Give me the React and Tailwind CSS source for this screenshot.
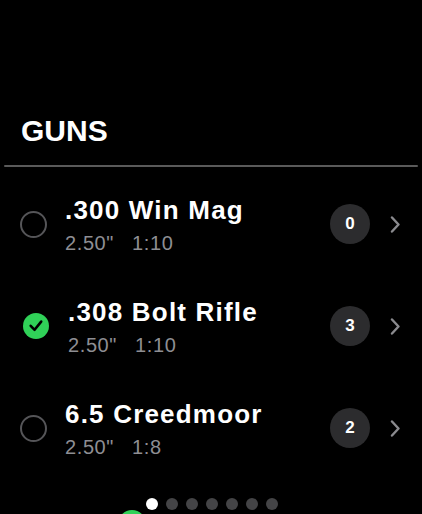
import React from 'react';

const guns = [
  { id: 1, name: '.300 Win Mag', height: '2.50"', twist: '1:10', count: 0, selected: false },
  { id: 2, name: '.308 Bolt Rifle', height: '2.50"', twist: '1:10', count: 3, selected: true },
  { id: 3, name: '6.5 Creedmoor', height: '2.50"', twist: '1:8', count: 2, selected: false },
];

const font = { fontFamily: '"Liberation Sans", Arial, sans-serif' };

const Radio = ({ selected }) =>
  selected ? (
    <svg width="26" height="26" viewBox="0 0 26 26">
      <circle cx="13" cy="13" r="13" fill="#30d158" />
      <path d="M7.7 12.8 L11.6 16.8 L18.2 8.6" fill="none" stroke="#000" strokeWidth="2.6" strokeLinecap="round" strokeLinejoin="round" />
    </svg>
  ) : (
    <div className="w-[27px] h-[27px] rounded-full border-[2.5px] border-[#555558]" />
  );

const Chevron = () => (
  <svg width="11" height="17" viewBox="0 0 11 17">
    <path d="M2 1.5 L8.5 8.5 L2 15.5" fill="none" stroke="#8a8a8e" strokeWidth="2.4" strokeLinecap="round" strokeLinejoin="round" />
  </svg>
);

const GunRow = ({ gun }) => (
  <div className="h-[102px] flex items-center">
    <div className={`flex items-center flex-1 ${gun.selected ? 'pl-[22px]' : 'pl-[20px]'}`}>
      <div className="w-[27px] flex justify-center">
        <Radio selected={gun.selected} />
      </div>
      <div className={`flex flex-col mt-[2px] ${gun.selected ? 'ml-[19px]' : 'ml-[18px]'}`}>
        <div className="text-[26px] leading-[30px] font-bold text-white tracking-[1.2px]">{gun.name}</div>
        <div className="mt-[6px] flex gap-[18px] text-[20px] leading-[24px] text-[#8e8e93] tracking-[0.6px]">
          <span>{gun.height}</span>
          <span>{gun.twist}</span>
        </div>
      </div>
    </div>
    <div className="flex items-center gap-[20px] pr-[21px]">
      <div className="w-[40px] h-[40px] rounded-full bg-[#2c2c2e] flex items-center justify-center text-white font-bold text-[17px]">
        {gun.count}
      </div>
      <Chevron />
    </div>
  </div>
);

export default function App() {
  return (
    <div className="w-[422px] h-[514px] bg-black overflow-hidden flex flex-col relative" style={font}>
      <h1 className="pt-[116px] pl-[21px] text-[30px] leading-[30px] font-bold text-white">GUNS</h1>
      <div className="mt-[19px] mx-[4px] h-[2px] rounded-full bg-[#5a5a5a]" />
      <div className="mt-[6px] flex flex-col">
        {guns.map(gun => (
          <GunRow key={gun.id} gun={gun} />
        ))}
      </div>
      <div className="flex justify-center gap-[8px] pl-[1px] mt-[19px]">
        {[0, 1, 2, 3, 4, 5, 6].map(i => (
          <div key={i} className={`w-[12px] h-[12px] rounded-full ${i === 0 ? 'bg-white' : 'bg-[#444446]'}`} />
        ))}
      </div>
      <div className="absolute left-[118px] top-[510px] w-[28px] h-[28px] rounded-full bg-[#30d158]" />
    </div>
  );
}
